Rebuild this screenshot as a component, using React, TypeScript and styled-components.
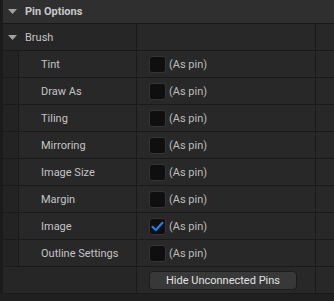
import React from 'react';
import styled, { createGlobalStyle } from 'styled-components';

const GlobalStyle = createGlobalStyle`
  html, body {
    margin: 0;
    padding: 0;
    background: #202020;
  }
  body {
    font-family: Roboto, 'Noto Sans', sans-serif;
    font-size: 11px;
    color: #c0c0c0;
  }
`;

const pins = [
  { label: 'Tint', checked: false },
  { label: 'Draw As', checked: false },
  { label: 'Tiling', checked: false },
  { label: 'Mirroring', checked: false },
  { label: 'Image Size', checked: false },
  { label: 'Margin', checked: false },
  { label: 'Image', checked: true },
  { label: 'Outline Settings', checked: false },
];

const Caret = () => (
  <svg width="9" height="5" viewBox="0 0 9 5">
    <polygon points="0,0 9,0 4.5,5" fill="#a0a0a0" />
  </svg>
);

const Check = () => (
  <svg width="13" height="11" viewBox="0 0 13 11">
    <polyline
      points="1.5,5.8 4.8,9 11.5,1.8"
      fill="none"
      stroke="#1b80f0"
      strokeWidth="2.2"
      strokeLinecap="round"
      strokeLinejoin="round"
    />
  </svg>
);

const App = () => {
  return (
    <>
      <GlobalStyle />
      <Panel>
        <CategoryHeader>
          <Caret />
          <CategoryTitle>Pin Options</CategoryTitle>
        </CategoryHeader>

        <Row>
          <NameCell $indent={false}>
            <GroupLabel>
              <Caret />
              <span>Brush</span>
            </GroupLabel>
          </NameCell>
          <ValueCell />
          <Tail />
        </Row>

        {pins.map((pin) => (
          <Row key={pin.label}>
            <NameCell $indent>
              <Indent />
              <PropLabel>{pin.label}</PropLabel>
            </NameCell>
            <ValueCell>
              <CheckBox>{pin.checked && <Check />}</CheckBox>
              <PinText>(As pin)</PinText>
            </ValueCell>
            <Tail />
          </Row>
        ))}

        <Row>
          <NameCell $indent={false} />
          <ValueCell>
            <HideButton type="button">Hide Unconnected Pins</HideButton>
          </ValueCell>
          <Tail />
        </Row>
      </Panel>
    </>
  );
};

export default App;

const Panel = styled.div`
  width: 331px;
  border-left: 3px solid #1b1b1b;
  background: #282828;
`;

const CategoryHeader = styled.div`
  height: 23px;
  display: flex;
  align-items: center;
  gap: 8px;
  padding-left: 5px;
  background: #2f2f2f;
  border-bottom: 1px solid #191919;
`;

const CategoryTitle = styled.span`
  font-weight: 700;
  font-size: 11px;
  color: #c8c8c8;
`;

const Row = styled.div`
  display: grid;
  grid-template-columns: 134px 179px 1fr;
  height: 26px;
  border-bottom: 1px solid #1a1a1a;
  background: #262626;
`;

const NameCell = styled.div<{ $indent: boolean }>`
  display: flex;
  align-items: stretch;
  border-right: 1px solid #1a1a1a;
  background: ${({ $indent }) => ($indent ? '#282828' : '#262626')};
`;

const Indent = styled.div`
  width: 15px;
  flex: none;
  background: #232323;
  border-right: 1px solid #1a1a1a;
`;

const GroupLabel = styled.div`
  display: flex;
  align-items: center;
  gap: 8px;
  padding-left: 5px;
  font-size: 11px;
  color: #c4c4c4;
`;

const PropLabel = styled.div`
  display: flex;
  align-items: center;
  padding-left: 22px;
  font-size: 11px;
  color: #c4c4c4;
`;

const ValueCell = styled.div`
  display: flex;
  align-items: center;
  padding-left: 12px;
  border-right: 1px solid #1a1a1a;
  background: #282828;
`;

const Tail = styled.div`
  background: #282828;
`;

const CheckBox = styled.div`
  box-sizing: border-box;
  width: 17px;
  height: 17px;
  border: 1px solid #343434;
  border-radius: 3px;
  background: #0f0f0f;
  display: flex;
  align-items: center;
  justify-content: center;
`;

const PinText = styled.span`
  margin-left: 3px;
  font-size: 11px;
  color: #bdbdbd;
`;

const HideButton = styled.button`
  box-sizing: border-box;
  width: 148px;
  height: 19px;
  padding: 0;
  border: 1px solid #1c1c1c;
  border-radius: 4px;
  background: #383838;
  color: #e2e2e2;
  font-family: Roboto, 'Noto Sans', sans-serif;
  font-size: 11px;
  text-align: center;
`;
